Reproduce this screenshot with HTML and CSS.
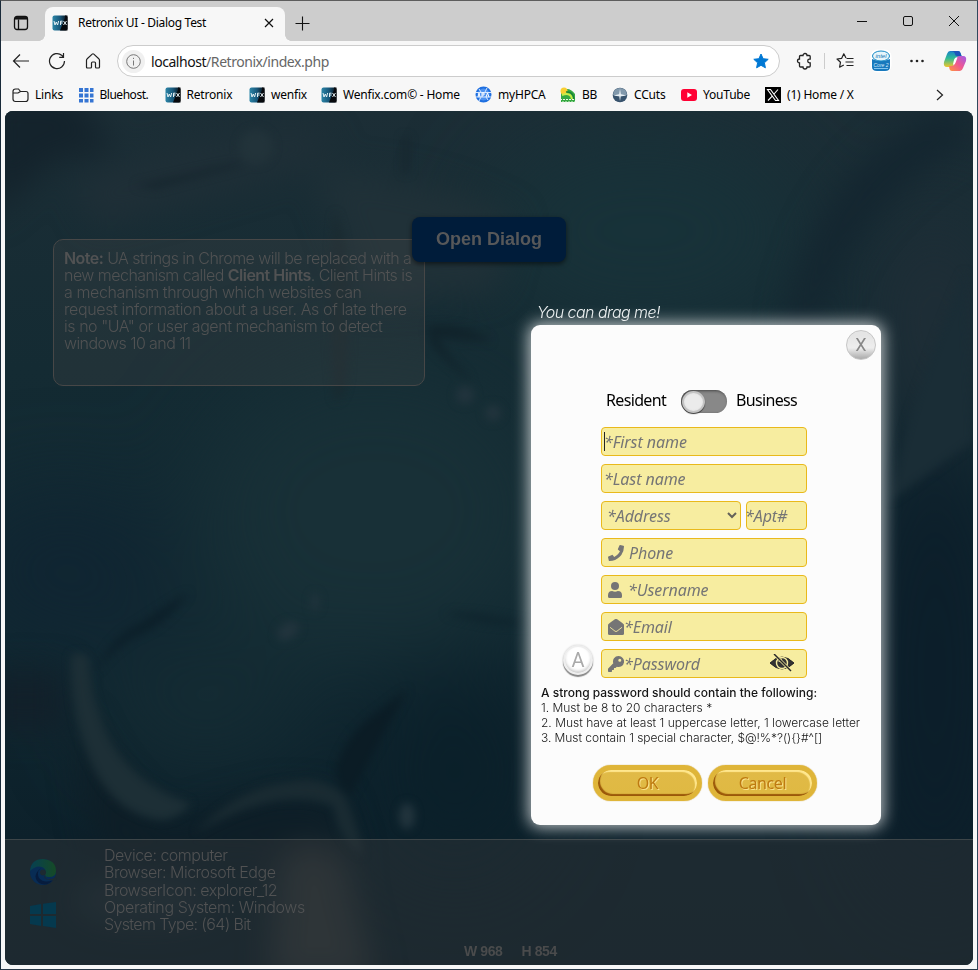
FILE: index.html
```html
<!DOCTYPE html>
<html lang="en">
<head>
<meta charset="utf-8">
<title>Retronix UI - Dialog Test</title>
<link rel="stylesheet" href="styles.css">
</head>
<body>
<svg class="defs" width="0" height="0">
  <defs>
    <linearGradient id="wfxg" x1="0" x2="1" y1="0" y2="0"><stop offset="0" stop-color="#2c86a8"/><stop offset=".5" stop-color="#18577a"/><stop offset="1" stop-color="#050a10"/></linearGradient>
    <symbol id="wfx" viewBox="0 0 16 16"><rect x=".5" y=".5" width="15" height="15" rx="2" fill="url(#wfxg)"/><path d="M8 15.500 13 3V.5h2.500v15z" fill="#07090d"/><path d="M2 6l1 4 1.300-3 1.300 3 1-4M8.500 10V6.200h2M8.500 8h2M11.500 6l3 4M14.500 6l-3 4" fill="none" stroke="#e4f0f4" stroke-width="1"/></symbol>
  </defs>
</svg>
<div class="window">
  <header class="tabs">
    <svg class="workspaces" width="16" height="16" viewBox="0 0 16 16" fill="none" stroke="#111" stroke-width="1.300"><rect x="1.500" y="1.500" width="13" height="13" rx="2.500"/><path d="M5.500 4.500v10"/><path d="M2 3.300h12" stroke-width="2.500"/></svg>
    <div class="tab">
      <svg width="16" height="16"><use href="#wfx"/></svg>
      <span class="tab-title">Retronix UI - Dialog Test</span>
      <svg class="tab-close" width="10" height="10" viewBox="0 0 10 10" stroke="#111" stroke-width="1.200"><path d="M1 1l8 8M9 1l-8 8"/></svg>
    </div>
    <svg class="newtab" width="15" height="15" viewBox="0 0 15 15" stroke="#111" stroke-width="1.100"><path d="M7.500 .5v14M.5 7.500h14"/></svg>
    <div class="controls">
      <svg width="12" height="12" viewBox="0 0 12 12" stroke="#111" fill="none"><path d="M1 6.500h10"/></svg>
      <svg width="12" height="12" viewBox="0 0 12 12" stroke="#111" fill="none"><rect x="1.500" y="1.500" width="9" height="9" rx="1.500"/></svg>
      <svg width="12" height="12" viewBox="0 0 12 12" stroke="#111" fill="none"><path d="M1 1l10 10M11 1L1 11"/></svg>
    </div>
  </header>
  <nav class="toolbar">
    <svg width="18" height="18" viewBox="0 0 18 18" fill="none" stroke="#222" stroke-width="1.200"><path d="M17 9H1.500M8 2.500L1.500 9 8 15.500"/></svg>
    <svg width="18" height="18" viewBox="0 0 18 18" fill="none" stroke="#222" stroke-width="1.200"><path d="M16.500 9A7.500 7.500 0 1 1 14 3.500L15.500 5M15.500 1v4.300h-4.300"/></svg>
    <svg width="18" height="18" viewBox="0 0 18 18" fill="none" stroke="#222" stroke-width="1.200"><path d="M2.500 8.200q0-.9.700-1.500l5-4.600q.8-.7 1.600 0l5 4.600q.7.600.7 1.500V15q0 1-1 1h-2q-1 0-1-1v-4q0-1-1-1h-2q-1 0-1 1v4q0 1-1 1h-3q-1 0-1-1z"/></svg>
    <div class="address">
      <span class="info"><svg width="15" height="15" viewBox="0 0 15 15" fill="none" stroke="#777"><circle cx="7.500" cy="7.500" r="6.800"/><path d="M7.500 6.500v5M7.500 3.800v1.200"/></svg></span>
      <span class="url"><b>localhost</b>/Retronix/index.php</span>
      <svg class="star" width="16" height="16" viewBox="0 0 16 16" fill="#0078d4" stroke="#0078d4" stroke-linejoin="round"><path d="M8 1l2.100 4.700 5.100.6-3.800 3.500 1 5L8 12.300l-4.400 2.500 1-5L.8 6.300l5.100-.6z"/></svg>
    </div>
    <div class="actions">
      <svg width="18" height="18" viewBox="0 0 18 18" fill="none" stroke="#222" stroke-width="1.300"><path d="M5.500 3.500H8a2 2 0 0 1 4 0h2.200q1 0 1 1v2.700h-.7a1.800 1.800 0 0 0 0 3.600h.7v3.200q0 1-1 1H12a2 2 0 0 1-4 0H5.500q-1 0-1-1v-3a2 2 0 0 1 0-4v-2.500q0-1 1-1z"/></svg>
      <i class="sep"></i>
      <svg width="18" height="18" viewBox="0 0 18 18" fill="none" stroke="#222" stroke-width="1.200" stroke-linejoin="round"><path d="M10 6L7.800 1.800 5.700 6.300 1 7l3.500 3.200-.9 5L7.800 13M10.500 6.500h7M9.500 10h8M10.500 13.500h7"/></svg>
      <svg width="22" height="24" viewBox="0 0 22 24"><rect x=".5" y=".5" width="21" height="23" rx="7" fill="#fff"/><path d="M2 10q9 4 18 0v8q0 4-5 4H7q-5 0-5-4z" fill="#1879bd"/><ellipse cx="11" cy="7" rx="8.500" ry="5" fill="#e6f5fb" stroke="#168ac6"/><text x="11" y="9.200" class="badge-text" fill="#1074b1">intel</text><text x="11" y="17.500" class="badge-text core" fill="#d7edfc">Core 2</text><path d="M4 19.500h14" stroke="#81c5ef"/></svg>
      <svg width="16" height="16" viewBox="0 0 16 16" fill="#222"><circle cx="2.500" cy="8" r="1.300"/><circle cx="8" cy="8" r="1.300"/><circle cx="13.500" cy="8" r="1.300"/></svg>
      <svg width="24" height="22" viewBox="0 0 24 22"><defs><linearGradient id="c1" x1="0" y1="0" x2="0" y2="1"><stop offset="0" stop-color="#1b80ca"/><stop offset=".45" stop-color="#2dbb96"/><stop offset="1" stop-color="#f1c62a"/></linearGradient><linearGradient id="c2" x1="1" y1="0" x2="0" y2="1"><stop offset="0" stop-color="#9f5be8"/><stop offset=".5" stop-color="#ef5793"/><stop offset="1" stop-color="#ff963b"/></linearGradient></defs><path d="M7 1h8q2 0 2.500 2L19 7h-4q-2 0-3 3l-1.500 5q-.5 2-3 2H4q-4 0-3-5L4 4q1-3 3-3z" fill="url(#c1)"/><path d="M17 21H9q-2 0-2.500-2L6 16h3q2 0 3-3l1.500-5q.5-2 3-2H20q4 0 3 5l-3 7q-1 3-3 3z" fill="url(#c2)"/><path d="M7 1h8q2 0 2.500 2l1 3H14q-2 0-2-2-.5-3-5-3z" fill="#1c55ba"/><path d="M13 7.500q-2 0-3 7h1q1 0 2-3l1.500-4z" fill="#fff"/></svg>
    </div>
  </nav>
  <div class="bookmarks">
    <span><svg width="17" height="16" viewBox="0 0 17 16" fill="none" stroke="#222" stroke-width="1.200"><path d="M1 4.500q0-2.500 2.500-2.500h3l2 2.500H14q2 0 2 2V12q0 2.500-2.500 2.500h-10Q1 14.500 1 12zM1 6h5l2.500-1.500"/></svg>Links</span>
    <span class="tight"><svg width="16" height="16" viewBox="0 0 16 16" fill="#3575d3"><path d="M1 1h4v4H1zM6.500 1h4v4h-4zM12 1h3.500v4H12zM1 6.500h4v4H1zM6.500 6.500h4v4h-4zM12 6.500h3.500v4H12zM1 12h4v3.500H1zM6.500 12h4v3.500h-4zM12 12h3.500v3.500H12z"/></svg>Bluehost.</span>
    <span><svg width="16" height="16"><use href="#wfx"/></svg>Retronix</span>
    <span><svg width="16" height="16"><use href="#wfx"/></svg>wenfix</span>
    <span><svg width="16" height="16"><use href="#wfx"/></svg>Wenfix.com© - Home</span>
    <span><svg width="17" height="17" viewBox="0 0 17 17" fill="none" stroke="#1e6fe0"><circle cx="8.500" cy="8.500" r="7" stroke-width="2" fill="#4d92f0"/><path d="M1 6.500h15M1 11h15M4 3l2 3M12 2l-2 4M4 15l2-4M13 14l-2-3" stroke="#d5e7ff"/><path d="M3 11l1-4 1 4M7 11V7h2v2H7M11 11l1.500-4 1.500 4" stroke="#fff"/></svg>myHPCA</span>
    <span><svg width="16" height="16" viewBox="0 0 16 16"><path d="M1 5q7-7 14 2v8H1z" fill="#35a842"/><circle cx="4" cy="4" r="3.500" fill="#f9cf32"/><path d="M2 8q9-3 10 4" fill="none" stroke="#c5ed4a" stroke-width="2"/><path d="M6 5q7-1 8 7" stroke="#178436" stroke-width="1.500" fill="none"/><path d="M0 12.500h16M2 15h13" stroke="#eaf9e4" stroke-dasharray="2 1"/></svg>BB</span>
    <span><svg width="16" height="16" viewBox="0 0 16 16"><circle cx="8" cy="8" r="7.300" fill="#38536d"/><path d="M1 8a7 7 0 0 1 14 0q-7 2-14 0z" fill="#8299ac"/><path d="M1.500 8.500L8 7l6.500 1.500L8 9.500zM8 2l1 6-1 6-1-6z" fill="#e7eff4"/></svg>CCuts</span>
    <span><svg width="16" height="16" viewBox="0 0 16 16"><rect y="2" width="16" height="12" rx="3" fill="#ff0033"/><path d="M6.300 5.300v5.400L11 8z" fill="#fff"/></svg>YouTube</span>
    <span><svg width="16" height="16" viewBox="0 0 16 16"><path d="M0 0h16v16H0z" fill="#000"/><path d="M2.500 2.500h3l8 11h-3zM13 2.500L9 7M7 9.300l-4 4.200" fill="none" stroke="#fff" stroke-width="1.100"/></svg>(1) Home / X</span>
    <svg class="more" width="8" height="12" viewBox="0 0 8 12" fill="none" stroke="#222" stroke-width="1.200"><path d="M1 1l5.500 5L1 11"/></svg>
  </div>
  <main class="page">
    <svg class="sea" width="968" height="854" viewBox="0 0 968 854">
      <defs>
        <filter id="b4" color-interpolation-filters="sRGB" x="-20%" y="-20%" width="140%" height="140%"><feGaussianBlur stdDeviation="4"/></filter>
        <filter id="b12" color-interpolation-filters="sRGB" x="-50%" y="-50%" width="200%" height="200%"><feGaussianBlur stdDeviation="16"/></filter>
        <filter id="b50" color-interpolation-filters="sRGB" x="-100%" y="-100%" width="300%" height="300%"><feGaussianBlur stdDeviation="45"/></filter>
        <linearGradient id="seaBase" x1="0" y1="0" x2="0" y2="1"><stop offset="0" stop-color="#1c2e36"/><stop offset=".3" stop-color="#142b33"/><stop offset=".6" stop-color="#112932"/><stop offset=".85" stop-color="#0d212b"/><stop offset="1" stop-color="#0d1f28"/></linearGradient>
      </defs>
      <rect width="968" height="854" fill="url(#seaBase)"/>
      <g filter="url(#b50)">
        <ellipse cx="640" cy="120" rx="160" ry="100" fill="#183239"/>
        <ellipse cx="370" cy="400" rx="180" ry="150" fill="#183037"/>
        <ellipse cx="60" cy="460" rx="110" ry="80" fill="#102532"/>
        <ellipse cx="930" cy="560" rx="80" ry="240" fill="#0c1e2a"/>
        <ellipse cx="450" cy="660" rx="90" ry="110" fill="#0b202a"/>
        <ellipse cx="200" cy="590" rx="110" ry="70" fill="#142b33"/>
        <ellipse cx="930" cy="210" rx="60" ry="120" fill="#202e37"/>
      </g>
      <g filter="url(#b12)">
        <path d="M968 0H930Q800 70 782 220l20 40Q830 100 968 30z" fill="#142630"/>
        <path d="M-20-20H70l40 60-60 10-70 60z" fill="#14232c"/>
        <path d="M70 70Q190 20 310 15l20 30Q220 80 90 115z" fill="#1f2f37"/>
        <path d="M310 60Q420 60 510 110l-20 70-130 10z" fill="#203138"/>
        <path d="M-20 560H60V620H-20z" fill="#12202a"/>
        <path d="M75 600q30 80 90 115 120-50 170-20l15 60H95Q70 650 75 600z" fill="#0e1e27"/>
        <ellipse cx="140" cy="790" rx="70" ry="20" fill="#1a2b34"/>
        <path d="M275 750q35-30 65 0l30 120H265z" fill="#283236"/>
      </g>
      <g filter="url(#b4)">
        <path d="M330 100Q350 150 342 265q-3 25-12 25-10-70 0-190z" fill="#1a292f" opacity=".75"/>
        <path d="M422 215q35-5 65 15-30 0-55-4 10 18 34 43-6 0-40-35z" fill="#11232b"/>
        <path d="M90 562q15-35 42-48 30-20 52-33-25 35-55 45-25 15-39 36z" fill="#0c1f29"/>
        <path d="M66 545q10-6 18 2 0 30 10 55 15 55 72 83l20 8q-12 14-28 16-55-5-78-73-15-40-14-91z" fill="#1d2f36"/>
        <path d="M403 578q-22 40-58 108-14-10-14-30 10-30 35-50z" fill="#0b1c25"/>
        <path d="M190 722q45-48 100-52 30-5 50 15 15 35 18 60-25-15-30-50-55-22-138 27z" fill="#1a2b32"/>
        <path d="M440 502q35-2 90 12-50 2-90-12z" fill="#0f242d"/>
        <g fill="#22343d"><circle cx="460" cy="284" r="9"/><circle cx="488" cy="302" r="8"/><ellipse cx="283" cy="520" rx="12" ry="8" transform="rotate(-35 283 520)"/><ellipse cx="402" cy="705" rx="8" ry="13"/><ellipse cx="310" cy="491" rx="4" ry="9"/></g>
        <circle cx="251" cy="36" r="17" fill="#22333a"/>
        <path d="M130 74l100-22 10 2-90 24zM398 25l6 2v35h-6z" fill="#17272f"/>
        <path d="M960 160Q900 300 885 390l83-60z" fill="#1a2d36"/>
      </g>
    </svg>
    <section class="note"><p class="n1"><b>Note:</b> UA strings in Chrome will be replaced with a</p><p class="n2">new mechanism called <b>Client Hints</b>. Client Hints is</p><p class="n3">a mechanism through which websites can</p><p class="n4">request information about a user. As of late there</p><p class="n5">is no "UA" or user agent mechanism to detect</p><p class="n6">windows 10 and 11</p></section>
    <button class="open"><span>Open Dialog</span></button>
    <footer>
      <div class="platform">
        <svg width="28" height="28" viewBox="0 0 28 28"><defs><linearGradient id="edge1"><stop stop-color="#064052"/><stop offset="1" stop-color="#164a26"/></linearGradient></defs><circle cx="14" cy="14" r="13" fill="#082c54"/><path d="M1 13Q2 1 14 1q13 1 13 12 0 6-7 6-5 0-4-3 2-5-3-7Q7 7 1 13z" fill="url(#edge1)"/><path d="M12 10q-5 4-2 10 5 6 14 2-6 7-14 3-8-7 2-15z" fill="#071c3d"/><path d="M17 17q-2 2 1 4 4 1 9-2l1 3-2 1-8-1.500q-5-2.500-1-4.500z" fill="#1d2a31"/><circle cx="14" cy="14.500" r="3" fill="#1d2a31"/></svg>
        <svg width="28" height="26" viewBox="0 0 28 26" fill="#05394e"><path d="M1 4l11-2v10H1zM14 1.700L27 0v12H14zM1 14h11v10L1 22zM14 14h13v12l-13-2z"/></svg>
      </div>
      <div class="specs"><p class="s1">Device: computer</p><p class="s2">Browser: Microsoft Edge</p><p class="s3">BrowserIcon: explorer_12</p><p class="s4">Operating System: Windows</p><p class="s5">System Type: (64) Bit</p></div>
      <div class="size"><span>W 968</span><span>H 854</span></div>
    </footer>
    <div class="dialog-wrap">
      <div class="drag"><span>You can drag me!</span></div>
      <div class="dialog">
        <div class="close-row"><span class="close">X</span></div>
        <div class="switch-row"><span class="resident">Resident</span><span class="toggle"><i></i></span><span class="business">Business</span></div>
        <div class="fields">
          <div class="field"><i class="caret"></i><span class="f1">*First name</span></div>
          <div class="field last"><span class="f2">*Last name</span></div>
          <div class="pair"><div class="field addr"><span class="f3">*Address</span><svg width="10" height="7" viewBox="0 0 10 7" fill="none" stroke="#65625a" stroke-width="2"><path d="M1 1l4 4 4-4"/></svg></div><div class="field apt"><span class="f4">*Apt#</span></div></div>
          <div class="field icon"><svg width="16" height="16" viewBox="0 0 512 512" fill="#757575"><path d="M493 25L389 1q-17-4-24 12l-48 112q-6 14 6 24l60 50q-54 119-184 184l-50-60q-10-12-24-6L13 365q-16 8-12 24l24 104q4 17 23 18 192 0 328-135T512 48q-1-18-19-23z"/></svg><span class="f5">Phone</span></div>
          <div class="field icon"><svg width="14" height="16" viewBox="0 0 448 512" fill="#757575"><circle cx="224" cy="128" r="128"/><path d="M314 288q-88 42-180 0Q0 292 0 422v42q0 48 48 48h352q48 0 48-48v-42q0-130-134-134z"/></svg><span class="f6">*Username</span></div>
          <div class="field icon"><svg width="16" height="16" viewBox="0 0 512 512" fill="#757575"><path d="M18 160Q190 20 220 7q36-15 72 0 30 13 202 153 18 15 18 38v266q0 48-48 48H48q-48 0-48-48V198q0-23 18-38z"/><path d="M65 265l160 125q31 22 62 0l160-125" fill="none" stroke="#f7eda0" stroke-width="28"/></svg><span class="f7">*Email</span></div>
          <div class="field icon password"><svg width="16" height="16" viewBox="0 0 512 512" fill="#757575"><path fill-rule="evenodd" d="M336 0a176 176 0 0 0-166 235L7 398q-7 7-7 17v73q0 24 24 24h80q24 0 24-24v-40h40q24 0 24-24v-40h40q10 0 17-7l34-34A176 176 0 1 0 336 0zm41 87a48 48 0 1 1 0 96 48 48 0 0 1 0-96z"/></svg><span class="f8">*Password</span><svg class="eye" width="26" height="18" viewBox="0 0 26 18" fill="none" stroke="#282828"><path d="M1 9Q13-3 25 9 13 21 1 9z" fill="#333"/><circle cx="13" cy="9" r="5.500" stroke="#f7eda0" stroke-width="1.400" fill="#333"/><path d="M10 8a3 3 0 0 1 3-3" stroke="#f7eda0"/><path d="M6 1l15 15" stroke="#f7eda0" stroke-width="2.800"/><path d="M5 0l17 17" stroke-width="1.500"/></svg><span class="auto">A</span></div>
        </div>
        <div class="rules"><p class="r1"><b>A strong password should contain the following:</b></p><p class="r2">1. Must be 8 to 20 characters *</p><p class="r3">2. Must have at least 1 uppercase letter, 1 lowercase letter</p><p class="r4">3. Must contain 1 special character, $@!%*?(){}#^[]</p></div>
        <div class="buttons"><button><span>OK</span></button><button><span class="cancel">Cancel</span></button></div>
      </div>
    </div>
  </main>
</div>
</body>
</html>
```
FILE: styles.css
```css
*{box-sizing:border-box}
body{margin:0;background:#f7f7f7;font-family:"Noto Sans","Open Sans",sans-serif}
p{margin:0;white-space:nowrap}
svg{display:block;flex-shrink:0}
.defs{position:absolute}
span{white-space:nowrap}
.window{width:978px;height:970px;border:1px solid #5d5d5d;border-left-color:#192a39;border-right-color:#30475c;border-bottom-color:#263746;background:#f7f7f7;overflow:hidden}
.tabs{height:40px;background:#cdcdcd;display:flex;padding-top:6px;font-size:12px}
.workspaces{margin:8px 16px 0 12px}
.tab{position:relative;height:34px;width:240px;background:#f7f7f7;border-radius:8px 8px 0 0;padding:0 11px 2px 7px;display:flex;align-items:center}
.tab:before,.tab:after{content:"";position:absolute;bottom:0;width:6px;height:6px}
.tab:before{left:-6px;background:radial-gradient(circle at 0 0,transparent 5.500px,#f7f7f7 6px)}
.tab:after{right:-6px;background:radial-gradient(circle at 100% 0,transparent 5.500px,#f7f7f7 6px)}
.tab-title{margin-left:10px;letter-spacing:-.3px;margin-top:-1px}
.tab-close{margin-left:auto}
.newtab{margin:9px 0 0 10px}
.controls{margin:8px 17px 0 auto;display:flex;gap:34px}
.toolbar{height:40px;display:flex;align-items:center;padding-left:11px;gap:18px}
.address{width:663px;flex-shrink:0;height:32px;background:#fff;border:1px solid #ccc;border-radius:16px;margin-left:-3px;display:flex;align-items:center;padding:0 10px 0 4px}
.info{width:23px;height:23px;border-radius:50%;background:#f0f0f0;display:grid;place-items:center}
.url{font-size:14px;color:#666;margin-left:6px;letter-spacing:-.45px}
.url b{font-weight:400;color:#111}
.star{margin-left:auto}
.actions{display:grid;grid-template-columns:24px 17px 24px 48px 24px 51px;place-items:center;margin-left:-6px}
.sep{width:1px;height:16px;background:#ccc}
.badge-text{font:italic 6px "Liberation Sans",sans-serif;text-anchor:middle}
.core{font-size:5px}
.bookmarks{height:27px;margin-bottom:3px;display:grid;grid-template-columns:65.500px 87px 84.500px 72px 154px 85px 52px 69px 84px 171px 10px;padding-left:11px;align-items:center;font-size:12px;letter-spacing:-.2px}
.bookmarks span{display:flex;align-items:center;gap:6px}
.bookmarks .tight{letter-spacing:-.48px}
.page{position:relative;width:968px;height:854px;margin-left:4px;border-radius:8px;overflow:hidden;display:flex;flex-direction:column;background:#142b34}
.sea{position:absolute;inset:0}
.note{position:relative;width:372px;height:147px;margin:128px 0 0 48px;border:1px solid #474747;border-radius:10px;background:rgba(75,75,75,.24);padding:10px 10px;color:#515253;font:300 16px/17px Inter,sans-serif}
.note b{font-weight:600}
.n1{letter-spacing:-.55px}.n2{letter-spacing:-.53px}.n3{letter-spacing:-.39px}.n4{letter-spacing:-.38px}.n5{letter-spacing:-.45px}.n6{letter-spacing:-.58px}
.open{position:absolute;left:407px;top:106px;width:154px;height:45px;border:0;border-radius:8px;background:#001c3a;box-shadow:0 2px 5px #0008;color:#575859;font:bold 18px "Liberation Sans",sans-serif}
footer{position:relative;margin-top:auto;height:126px;border-top:1px solid #3d4548;background:rgba(55,57,59,.4);color:#515253}
.platform{position:absolute;left:24px;top:18px;display:grid;gap:16px}
.specs{padding:7px 0 0 99px;font:300 16px/17.250px Inter,sans-serif}
.s1,.s2,.s3{letter-spacing:-.49px}.s4{letter-spacing:-.39px}.s5{letter-spacing:-.64px}
.size{display:flex;gap:19px;margin:10px 0 0 459px;font:bold 14px/16px "Liberation Sans",sans-serif;letter-spacing:-.4px;color:#4a4b4c}
.dialog-wrap{position:absolute;left:526px;top:190px;width:350px}
.drag{height:24px;padding:2px 0 0 6px;color:#edf1f2;font:italic 300 16px/18px Inter,sans-serif;letter-spacing:-.56px}
.dialog{height:500px;background:#fcfcfc;border-radius:9px;box-shadow:0 0 16px 2px rgba(255,255,255,.75);padding:5px;display:flex;flex-direction:column}
.close-row{display:flex;justify-content:flex-end}
.close{width:30px;height:30px;border:1px solid #c6c6c6;border-radius:50%;background:linear-gradient(#e5e5e5 15%,#eee 60%,#aaa);color:#888;font:18px/28px Roboto,sans-serif;text-align:center}
.switch-row{display:flex;align-items:center;height:24px;margin-top:28px;padding-left:70px;font-size:16px;letter-spacing:-.66px}
.resident{width:75px}
.toggle{width:46px;height:23px;border-radius:12px;background:#888;box-shadow:inset 1px 1px 3px #444;padding:1px;margin:2px 9px 0 0}
.toggle i{display:block;width:23px;height:22px;border-radius:50%;background:#ebebeb;border:2px solid #c4c4c4;box-shadow:0 1px 1px #333,inset 0 0 2px #ddd}
.fields{margin:15px 0 0 65px;display:grid;gap:8px;width:206px}
.field{height:29px;border:1px solid #e9b91b;border-radius:4px;background:#f7eda0;display:flex;align-items:center;padding-left:2px;color:#757575;font-style:italic;font-size:16px;line-height:28px;letter-spacing:-.08px}
.caret{width:1px;height:19px;background:#222;margin-right:-1px}
.pair{display:flex;gap:5px}
.addr{width:140px;padding:0 3px 0 5px;justify-content:space-between}
.apt{width:61px;padding-left:0}
.f4{margin-left:-2px}
.icon{padding-left:6px;position:relative}
.f5{margin-left:5px}
.f6{margin-left:6px}
.eye{margin:0 11px 2px auto}
.auto{position:absolute;left:-39px;top:-5px;width:30px;height:30px;border-radius:50%;border:2px solid #eee;background:#fff;box-shadow:0 2px 1px #888,0 0 2px #ccc,inset 0 -2px 3px #ccc;color:#aaa;font:20px/26px Roboto,sans-serif;text-align:center}
.rules{margin:7px 0 0 5px;color:#151515;font:300 12px/15px Inter,sans-serif}
.rules b{font-weight:500}
.r4{letter-spacing:-.06px}
.buttons{display:flex;gap:6px;margin:20px 0 0 57px}
.buttons button{width:109px;height:36px;border:5px solid #dfb539;border-radius:18px;background:linear-gradient(#e1ba47,#dfb942);box-shadow:inset 2px -2px 1px #9b5809,inset -2px 2px 1px #ffe78e,0 0 1px #b98b1c;padding:0;color:#be7a10;font:16px/24px "Noto Sans",sans-serif;letter-spacing:-.4px;text-shadow:1px 1px #f9e18d}
```
